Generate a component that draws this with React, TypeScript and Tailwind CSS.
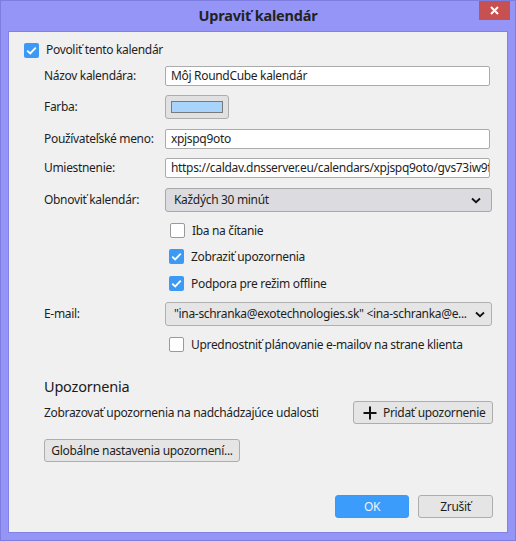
import React from "react";

const font = { fontFamily: '"Noto Sans", "Open Sans", sans-serif' };

function Check({ checked }: { checked: boolean }) {
  return checked ? (
    <span className="flex h-[15px] w-[15px] shrink-0 items-center justify-center rounded-[2px] bg-[#3c99f5]">
      <svg width="11" height="9" viewBox="0 0 11 9">
        <path d="M1.2 4.6 L4.2 7.4 L9.8 1.6" fill="none" stroke="#fff" strokeWidth="1.8" />
      </svg>
    </span>
  ) : (
    <span className="h-[15px] w-[15px] shrink-0 rounded-[2px] border border-[#9a9a9a] bg-white" />
  );
}

function Chevron() {
  return (
    <svg width="10" height="7" viewBox="0 0 10 7" className="shrink-0">
      <path d="M1 1.5 L5 5.2 L9 1.5" fill="none" stroke="#111" strokeWidth="1.8" />
    </svg>
  );
}

function Label({ children }: { children: React.ReactNode }) {
  return <div className="w-[121px] shrink-0 text-[12px] text-[#1e1e1e]">{children}</div>;
}

function Input({ value }: { value: string }) {
  return (
    <div className="flex h-[20px] w-[325px] items-center overflow-hidden whitespace-nowrap rounded-[2px] border border-[#ababab] bg-white pl-[5px] text-[12px] text-[#1e1e1e]">
      {value}
    </div>
  );
}

export default function App() {
  return (
    <div
      style={font}
      className="flex h-[541px] w-[516px] flex-col border border-[#7d7de0] bg-[#9595f8]"
    >
      <div className="relative flex h-[30px] shrink-0 items-center justify-center">
        <span className="text-[14.5px] font-bold tracking-[-0.2px] text-[#222]">Upraviť kalendár</span>
        <div className="absolute right-[5px] top-0 flex h-[19px] w-[31px] items-center justify-center bg-[#c75050]">
          <svg width="9" height="9" viewBox="0 0 9 9">
            <path d="M1 1 L8 8 M8 1 L1 8" stroke="#fff" strokeWidth="2" />
          </svg>
        </div>
      </div>
      <div className="mx-[7px] mb-[7px] flex flex-1 flex-col border border-[#8282e2] bg-[#f0f0f0] pl-[15px] text-[12px] tracking-[-0.32px] text-[#1e1e1e]">
        <div className="mt-[10px] flex h-[16px] items-center gap-[7px]">
          <Check checked />
          <span className="text-[12px]">Povoliť tento kalendár</span>
        </div>
        <div className="ml-[20px] flex flex-col">
          <div className="mt-[8px] flex items-center">
            <Label>Názov kalendára:</Label>
            <Input value="Môj RoundCube kalendár" />
          </div>
          <div className="mt-[9px] flex items-center">
            <Label>Farba:</Label>
            <div className="flex h-[24px] w-[64px] items-center justify-center rounded-[3px] border border-[#adadad] bg-[#e1e1e1]">
              <div className="h-[12px] w-[52px] border border-[#7a7a7a] bg-[#a8d4fc]" />
            </div>
          </div>
          <div className="mt-[10px] flex items-center">
            <Label>Používateľské meno:</Label>
            <Input value="xpjspq9oto" />
          </div>
          <div className="mt-[9px] flex items-center">
            <Label>Umiestnenie:</Label>
            <Input value="https://caldav.dnsserver.eu/calendars/xpjspq9oto/gvs73iw9f" />
          </div>
          <div className="mt-[10px] flex items-center">
            <Label>Obnoviť kalendár:</Label>
            <div className="flex h-[24px] w-[327px] items-center justify-between rounded-[3px] border border-[#a8a8a8] bg-[#dcdce0] pl-[8px] pr-[10px]">
              <span>Každých 30 minút</span>
              <Chevron />
            </div>
          </div>
          <div className="ml-[126px] mt-[11px] flex h-[15px] items-center gap-[7px]">
            <Check checked={false} />
            <span>Iba na čítanie</span>
          </div>
          <div className="ml-[125px] mt-[11px] flex h-[15px] items-center gap-[7px]">
            <Check checked />
            <span>Zobraziť upozornenia</span>
          </div>
          <div className="ml-[125px] mt-[12px] flex h-[15px] items-center gap-[7px]">
            <Check checked />
            <span>Podpora pre režim offline</span>
          </div>
          <div className="mt-[11px] flex items-center">
            <Label>E-mail:</Label>
            <div className="flex h-[24px] w-[327px] items-center justify-between gap-[4px] rounded-[3px] border border-[#b0b0b0] bg-[#e5e5e5] pl-[8px] pr-[6px]">
              <span className="min-w-0 overflow-hidden whitespace-nowrap">"ina-schranka@exotechnologies.sk" &lt;ina-schranka@e...</span>
              <Chevron />
            </div>
          </div>
          <div className="ml-[125px] mt-[11px] flex h-[15px] items-center gap-[7px]">
            <Check checked={false} />
            <span>Uprednostniť plánovanie e-mailov na strane klienta</span>
          </div>
          <div className="mt-[25px] flex h-[20px] items-center text-[14.5px] tracking-[-0.2px] text-[#1a1a1a]">Upozornenia</div>
          <div className="mt-[4px] flex items-center justify-between pr-[14px]">
            <span>Zobrazovať upozornenia na nadchádzajúce udalosti</span>
            <div className="flex h-[23px] w-[140px] items-center gap-[6px] rounded-[3px] border border-[#adadad] bg-[#e5e5e5] pl-[9px]">
              <svg width="14" height="14" viewBox="0 0 14 14">
                <path d="M7 0.5 V13.5 M0.5 7 H13.5" stroke="#111" strokeWidth="2" />
              </svg>
              <span>Pridať upozornenie</span>
            </div>
          </div>
          <div className="mt-[15px] flex h-[23px] w-[196px] items-center justify-center rounded-[3px] border border-[#adadad] bg-[#e5e5e5]">
            Globálne nastavenia upozornení...
          </div>
          <div className="mt-[33px] flex justify-end gap-[9px] pr-[14px]">
            <div className="flex h-[23px] w-[74px] items-center justify-center rounded-[3px] border border-[#3a9af8] bg-[#3c9cfc] text-[#eaf4ff]">
              OK
            </div>
            <div className="flex h-[23px] w-[75px] items-center justify-center rounded-[3px] border border-[#adadad] bg-[#e5e5e5]">
              Zrušiť
            </div>
          </div>
        </div>
      </div>
    </div>
  );
}
